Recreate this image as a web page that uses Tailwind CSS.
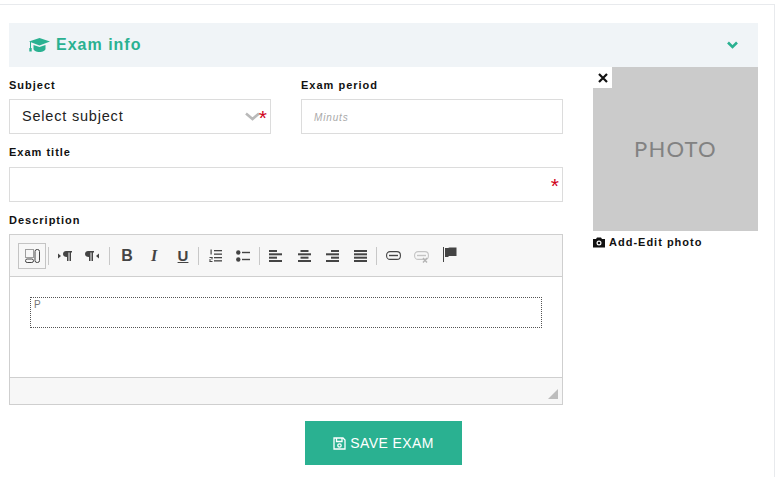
<!DOCTYPE html>
<html lang="en">

<head>
  <meta charset="UTF-8">
  <title>Exam info</title>
  <script src="https://cdn.jsdelivr.net/npm/@tailwindcss/browser@4"></script>
</head>

<body class="bg-white font-['Liberation_Sans',Arial,sans-serif] overflow-hidden">
  <div class="w-[775px] h-[477px] pt-[4px]">
    <div class="h-[473px] border-t border-r border-[#e8eaed] pt-[18px] pl-[9px] pr-[16px]">

      <!-- Header -->
      <div class="h-[44px] w-[749px] bg-[#f0f4f7] flex items-center justify-between pl-[20px] pr-[20px]">
        <div class="flex items-center gap-[6px] text-[#2ab191]">
          <svg class="w-[21px] h-[14px]" viewBox="0 0 21 14" fill="#2ab191">
            <path d="M10.5 0 L21 3.6 L10.5 7.4 L0 3.6 Z" />
            <path d="M4.5 7 L10.5 9 L16.5 7 V10.8 C16.5 12.6 13.8 14 10.5 14 C7.2 14 4.5 12.6 4.5 10.8 Z" />
            <rect x="1" y="4" width="1" height="7" />
            <rect x="0.3" y="10" width="2.4" height="3.5" />
          </svg>
          <span class="text-[16px] font-bold tracking-[1px] leading-none">Exam info</span>
        </div>
        <svg class="w-[11px] h-[8px]" viewBox="0 0 11 8" fill="none" stroke="#2ab191" stroke-width="2.6">
          <path d="M1 1.5 L5.5 6 L10 1.5" />
        </svg>
      </div>

      <div class="flex w-[749px]">
        <!-- Form column -->
        <div class="w-[554px]">
          <div class="flex gap-[30px]">
            <div class="w-[262px]">
              <label class="block h-[32px] pt-[12px] text-[11px] leading-[13px] font-bold tracking-[1px] text-[#111]">Subject</label>
              <div class="h-[35px] border border-[#dcdcdc] flex items-center pl-[12px] pr-[3px]">
                <span class="text-[14.5px] tracking-[0.8px] text-[#222] flex-1">Select subject</span>
                <svg class="w-[15px] h-[9px]" viewBox="0 0 15 9" fill="none" stroke="#b9b9b9" stroke-width="2.6">
                  <path d="M1 1.5 L7.5 7 L14 1.5" />
                </svg>
                <span class="text-[21px] leading-none text-[#d0021b] h-[19px] -ml-[1px]">*</span>
              </div>
            </div>
            <div class="w-[262px]">
              <label class="block h-[32px] pt-[12px] text-[11px] leading-[13px] font-bold tracking-[1px] text-[#111]">Exam period</label>
              <div class="h-[35px] border border-[#dcdcdc] flex items-center pl-[12px]">
                <span class="text-[10px] italic tracking-[0.85px] text-[#a9a9a9] mt-[2px]">Minuts</span>
              </div>
            </div>
          </div>

          <label class="block h-[33px] pt-[12px] text-[11px] leading-[13px] font-bold tracking-[1px] text-[#111]">Exam title</label>
          <div class="h-[35px] border border-[#dcdcdc] flex items-center justify-end pr-[3px]">
            <span class="text-[21px] leading-none text-[#d0021b] h-[19px]">*</span>
          </div>

          <label class="block h-[32px] pt-[12px] text-[11px] leading-[13px] font-bold tracking-[1px] text-[#111]">Description</label>

          <!-- Editor -->
          <div class="h-[171px] border border-[#cfcfcf] flex flex-col">
            <div class="h-[42px] bg-[#f7f7f7] border-b border-[#cfcfcf] flex items-center pl-[8px] text-[#444]">
              <div class="w-[28px] h-[26px] border border-[#c4c4c4] flex items-center justify-center">
                <svg class="w-[15px] h-[14px]" viewBox="0 0 15 14" fill="none" stroke="#444" stroke-width="1">
                  <path d="M0.5 0.5 H8.5 V8.5 H0.5 Z" stroke-dasharray="1 1" />
                  <rect x="10" y="0.5" width="4.5" height="13" rx="2" />
                  <rect x="0.5" y="10" width="8" height="3.5" rx="1.7" />
                </svg>
              </div>
              <div class="w-px h-[18px] bg-[#c8c8c8] ml-[2px]"></div>
              <div class="w-[27px] flex justify-center ml-[2px]">
                <svg class="w-[14px] h-[12px]" viewBox="0 0 14 12" fill="#444">
                  <path d="M0 3.5 L3 6 L0 8.5 Z" />
                  <path d="M8 1 H14 V2.5 H13 V11 H11.5 V2.5 H10.5 V11 H9 V7 C6.5 7 5 5.8 5 4 C5 2.2 6.5 1 8 1 Z" />
                </svg>
              </div>
              <div class="w-[27px] flex justify-center">
                <svg class="w-[14px] h-[12px]" viewBox="0 0 14 12" fill="#444">
                  <path d="M3 1 H9 V2.5 H8 V11 H6.5 V2.5 H5.5 V11 H4 V7 C1.5 7 0 5.8 0 4 C0 2.2 1.5 1 3 1 Z" />
                  <path d="M14 3.5 L11 6 L14 8.5 Z" />
                </svg>
              </div>
              <div class="w-px h-[18px] bg-[#c8c8c8] ml-[4px]"></div>
              <div class="w-[28px] text-center text-[16px] font-bold ml-[3px] leading-none">B</div>
              <div class="w-[28px] text-center text-[16px] font-bold italic font-['Liberation_Serif',serif] leading-none -ml-[1px]">I</div>
              <div class="w-[28px] text-center text-[15px] font-bold underline leading-none ml-[1px]">U</div>
              <div class="w-px h-[18px] bg-[#c8c8c8] ml-[1px]"></div>
              <div class="w-[28px] flex justify-center ml-[2px]">
                <svg class="w-[13px] h-[13px]" viewBox="0 0 13 13" fill="#444">
                  <rect x="5" y="1" width="8" height="1.3" />
                  <rect x="5" y="4.5" width="8" height="1.3" />
                  <rect x="5" y="8" width="8" height="1.3" />
                  <rect x="5" y="11.2" width="8" height="1.3" />
                  <rect x="1.5" y="0.5" width="1.2" height="5" />
                  <rect x="0.5" y="8" width="3" height="1" />
                  <rect x="2.5" y="8" width="1" height="2.5" />
                  <rect x="0.5" y="10" width="1" height="2.5" />
                  <rect x="0.5" y="12" width="3" height="1" />
                </svg>
              </div>
              <div class="w-[28px] flex justify-center">
                <svg class="w-[14px] h-[12px]" viewBox="0 0 14 12" fill="#444">
                  <circle cx="2.3" cy="2.5" r="2.2" />
                  <circle cx="2.3" cy="9.5" r="2.2" />
                  <rect x="6" y="1.8" width="8" height="1.4" />
                  <rect x="6" y="8.8" width="8" height="1.4" />
                </svg>
              </div>
              <div class="w-px h-[18px] bg-[#c8c8c8] ml-[2px]"></div>
              <div class="w-[29px] flex justify-center ml-[1px]">
                <svg class="w-[13px] h-[12px]" viewBox="0 0 13 12" fill="#444">
                  <rect width="8" height="2" />
                  <rect y="3.3" width="13" height="2" />
                  <rect y="6.7" width="8" height="2" />
                  <rect y="10" width="13" height="2" />
                </svg>
              </div>
              <div class="w-[28px] flex justify-center">
                <svg class="w-[13px] h-[12px]" viewBox="0 0 13 12" fill="#444">
                  <rect x="2.5" width="8" height="2" />
                  <rect y="3.3" width="13" height="2" />
                  <rect x="2.5" y="6.7" width="8" height="2" />
                  <rect y="10" width="13" height="2" />
                </svg>
              </div>
              <div class="w-[28px] flex justify-center">
                <svg class="w-[13px] h-[12px]" viewBox="0 0 13 12" fill="#444">
                  <rect x="5" width="8" height="2" />
                  <rect y="3.3" width="13" height="2" />
                  <rect x="5" y="6.7" width="8" height="2" />
                  <rect y="10" width="13" height="2" />
                </svg>
              </div>
              <div class="w-[28px] flex justify-center">
                <svg class="w-[13px] h-[12px]" viewBox="0 0 13 12" fill="#444">
                  <rect width="13" height="2" />
                  <rect y="3.3" width="13" height="2" />
                  <rect y="6.7" width="13" height="2" />
                  <rect y="10" width="13" height="2" />
                </svg>
              </div>
              <div class="w-px h-[18px] bg-[#c8c8c8] ml-[2px]"></div>
              <div class="w-[28px] flex justify-center ml-[2px]">
                <svg class="w-[15px] h-[9px]" viewBox="0 0 15 9" fill="none" stroke="#444" stroke-width="1.1">
                  <rect x="0.6" y="0.6" width="13.8" height="7.8" rx="3.5" />
                  <path d="M3 4.5 H12" stroke-width="1.4" />
                </svg>
              </div>
              <div class="w-[28px] flex justify-center mt-[3px]">
                <svg class="w-[15px] h-[12px]" viewBox="0 0 15 12" fill="none" stroke="#c4c4c4" stroke-width="1.1">
                  <rect x="0.6" y="0.6" width="13.8" height="7.8" rx="3.5" />
                  <path d="M3 4.5 H12" stroke-width="1.4" />
                  <path d="M9 7 L13 11.5 M13 7 L9 11.5" stroke-width="1.4" stroke="#b4b4b4" />
                </svg>
              </div>
              <div class="w-[28px] flex justify-center mb-[2px] ml-[1px]">
                <svg class="w-[14px] h-[15px]" viewBox="0 0 14 15" fill="#444">
                  <rect width="1" height="15" />
                  <path d="M2 1 H5 L6.5 0.5 L13.5 0.5 V9 H6 L5 10 H2 Z" />
                </svg>
              </div>
            </div>

            <div class="h-[100px] bg-white pt-[20px] px-[20px]">
              <div class="h-[31px] w-[512px] border border-dotted border-[#555] pl-[3px] pt-[1px] text-[10px] leading-[12px] text-[#777]">P</div>
            </div>

            <div class="flex-1 bg-[#f7f7f7] border-t border-[#cfcfcf] flex items-end justify-end pr-[4px] pb-[5px]">
              <svg class="w-[10px] h-[10px]" viewBox="0 0 10 10" fill="#bdbdbd">
                <path d="M10 0 V10 H0 Z" />
              </svg>
            </div>
          </div>
        </div>

        <!-- Photo column -->
        <div class="ml-[30px] w-[165px]">
          <div class="relative h-[164px] bg-[#cbcbcb] flex items-center justify-center">
            <div class="absolute left-0 top-0 w-[19px] h-[21px] bg-white flex items-center justify-center">
              <svg class="w-[10px] h-[10px]" viewBox="0 0 10 10" fill="none" stroke="#111" stroke-width="2.2">
                <path d="M1 1 L9 9 M9 1 L1 9" />
              </svg>
            </div>
            <span class="text-[22px] tracking-[1.2px] text-[#828282] font-['Lato',sans-serif] leading-none">PHOTO</span>
          </div>
          <div class="flex items-center gap-[4px] pt-[5px]">
            <svg class="w-[12px] h-[11px]" viewBox="0 0 12 11" fill="#111">
              <path fill-rule="evenodd" d="M4 0.5 H8 L9 2 H12 V10.5 H0 V2 H3 Z M6 3.5 A2.5 2.5 0 1 0 6 8.5 A2.5 2.5 0 1 0 6 3.5 Z" />
              <circle cx="6" cy="6" r="1.3" />
            </svg>
            <span class="text-[11px] leading-[13px] font-bold tracking-[1px] text-[#111]">Add-Edit photo</span>
          </div>
        </div>
      </div>

      <div class="w-[749px] flex justify-center pt-[16px]">
        <button class="w-[157px] h-[44px] bg-[#2ab191] text-white text-[14px] tracking-[0.4px] flex items-center justify-center gap-[4px]">
          <svg class="w-[13px] h-[13px]" viewBox="0 0 13 13" fill="none" stroke="#fff" stroke-width="1.3">
            <path d="M1 1 H10 L12 3 V12 H1 Z" />
            <path d="M3.5 1 V4.5 H9 V1" />
            <circle cx="6.5" cy="8.5" r="1.7" />
          </svg>
          SAVE EXAM
        </button>
      </div>
    </div>
  </div>
</body>

</html>
